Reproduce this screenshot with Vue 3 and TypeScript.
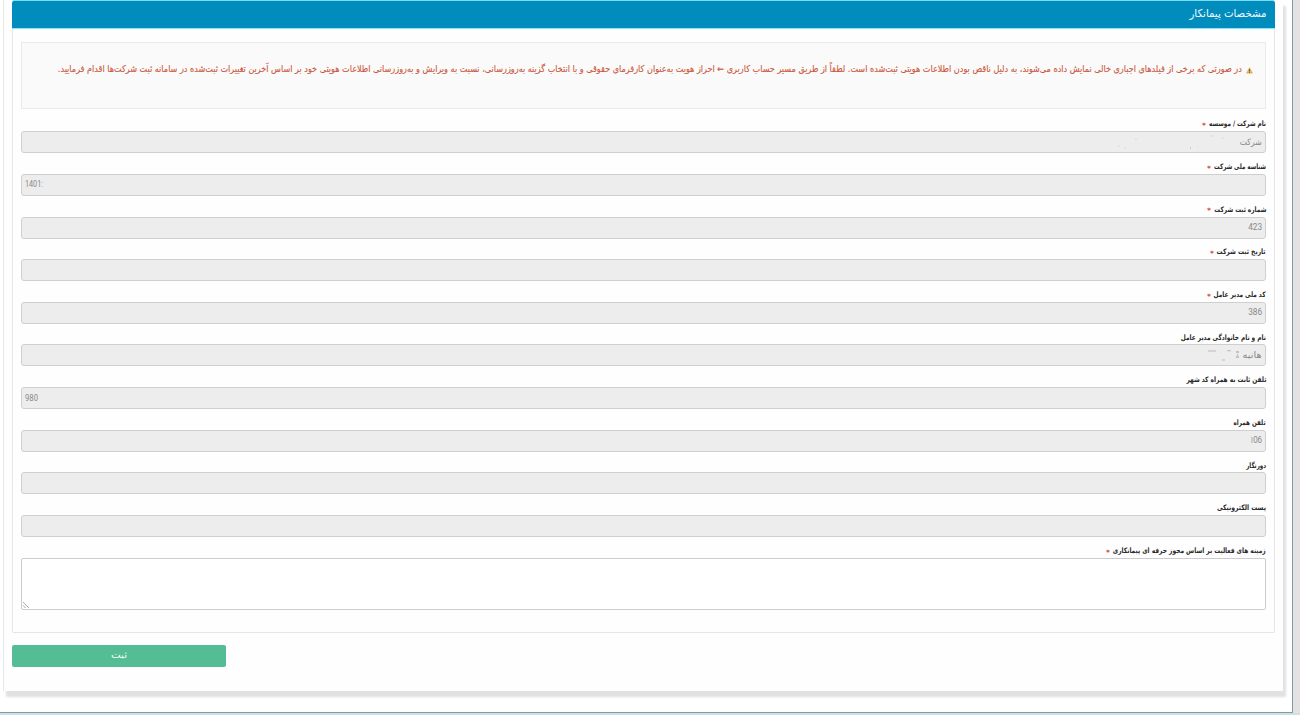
<script setup lang="ts">
import type { Directive } from 'vue'

interface Field {
  label: string
  labelWidth: number
  required?: boolean
  value?: string
  valueWidth?: number
  ltr?: boolean
  marks?: string
}

const fields: Field[] = [
  { label: 'نام شرکت / موسسه', labelWidth: 57, required: true, value: 'شرکت', valueWidth: 22, marks: 'company' },
  { label: 'شناسه ملی شرکت', labelWidth: 52, required: true, value: '1401:', valueWidth: 18, ltr: true },
  { label: 'شماره ثبت شرکت', labelWidth: 52, required: true, value: '423', valueWidth: 14 },
  { label: 'تاریخ ثبت شرکت', labelWidth: 49, required: true },
  { label: 'کد ملی مدیر عامل', labelWidth: 52, required: true, value: '386', valueWidth: 14 },
  { label: 'نام و نام خانوادگی مدیر عامل', labelWidth: 85, value: 'هانیه', valueWidth: 19, marks: 'name' },
  { label: 'تلفن ثابت به همراه کد شهر', labelWidth: 80, value: '980', valueWidth: 13, ltr: true },
  { label: 'تلفن همراه', labelWidth: 32, value: '06', valueWidth: 9, marks: 'mobile' },
  { label: 'دورنگار', labelWidth: 20 },
  { label: 'پست الکترونیکی', labelWidth: 49 },
]

// Condenses or widens a line of text horizontally to the given width.
const vFit: Directive<HTMLElement, number | undefined> = {
  mounted(el, binding) {
    if (!binding.value) return
    const natural = el.getBoundingClientRect().width
    el.style.transform = `scaleX(${binding.value / natural})`
    el.style.marginInlineEnd = `${binding.value - natural}px`
  },
}
</script>

<template>
  <div class="page" dir="rtl">
    <main class="frame">
      <section class="sheet">
        <div class="panel">
          <header class="heading"><span v-fit="77" class="fit">مشخصات پیمانکار</span></header>
          <div class="body">
            <div class="notice">
              <svg class="warn" viewBox="0 0 14 14">
                <path d="M7 1 L13.2 12.6 H.8 Z" fill="#e8bb55" stroke="#d2a040" stroke-width=".8" stroke-linejoin="round" />
                <path d="M7 4.6 V9" stroke="#444" stroke-width="1.8" />
                <circle cx="7" cy="11" r="1" fill="#444" />
              </svg>
              <span v-fit="1184" class="fit">در صورتی که برخی از فیلدهای اجباری خالی نمایش داده می‌شوند، به دلیل ناقص بودن اطلاعات هویتی ثبت‌شده است. لطفاً از طریق مسیر حساب کاربری ← احراز هویت به‌عنوان کارفرمای حقوقی و با انتخاب گزینه به‌روزرسانی، نسبت به ویرایش و به‌روزرسانی اطلاعات هویتی خود بر اساس آخرین تغییرات ثبت‌شده در سامانه ثبت شرکت‌ها اقدام فرمایید.</span>
            </div>
            <div v-for="f in fields" :key="f.label" class="field">
              <label class="label">
                <span v-fit="f.labelWidth" class="fit">{{ f.label }}</span>
                <b v-if="f.required" class="star">*</b>
              </label>
              <div class="input" :class="{ ltr: f.ltr }">
                <span v-if="f.value" v-fit="f.valueWidth" class="fit">{{ f.value }}</span>
                <svg v-if="f.marks === 'company'" class="marks" width="130" height="20" viewBox="0 0 130 20" fill="none" stroke="#d9d9d9">
                  <path d="M8 14h2M14 16h2M87 15h1M101 4h3M112 6h2M25 7h2" />
                  <path d="M80 16h1" stroke="#aaa" />
                </svg>
                <svg v-if="f.marks === 'name'" class="marks name" width="34" height="20" viewBox="0 0 34 20" fill="none" stroke="#bbb">
                  <path d="M1 6h8M20 6q2-1 4 0M15 15h3" />
                  <path d="M29 7h3M30 10h1M29 12h3" stroke="#999" />
                </svg>
                <svg v-if="f.marks === 'mobile'" class="tick" width="2" height="8" viewBox="0 0 2 8"><path d="M1 1v6" stroke="#aaa" /></svg>
              </div>
            </div>
            <div class="field">
              <label class="label">
                <span v-fit="153" class="fit">زمینه های فعالیت بر اساس مجوز حرفه ای پیمانکاری</span>
                <b class="star">*</b>
              </label>
              <div class="area">
                <svg width="8" height="8" viewBox="0 0 8 8" fill="none" stroke="#aaa"><path d="M1 1l6 6M1 4.5l2.5 2.5" /></svg>
              </div>
            </div>
          </div>
        </div>
        <button class="submit"><span v-fit="16" class="fit">ثبت</span></button>
      </section>
    </main>
  </div>
</template>

<style>
body {
  margin: 0;
  overflow: hidden;
}
</style>

<style scoped>
.page {
  box-sizing: border-box;
  width: 1300px;
  height: 715px;
  padding-right: 7px;
  background: #e5e1e3;
  border-bottom: 2px solid #d0dfe4;
  font-family: "DejaVu Sans", sans-serif;
  overflow: hidden;
}
.frame {
  box-sizing: border-box;
  width: 1293px;
  height: 713px;
  padding: 0 9px 0 3px;
  border-right: 1px solid #7d9da4;
  border-bottom: 1px solid #7d9da4;
  background: #fff;
}
.sheet {
  box-sizing: border-box;
  width: 1280px;
  height: 691px;
  padding: 0 8px;
  border-left: 1px solid #e8e8e8;
  background: #fefefe;
  box-shadow: 3px 6px 2px #e1e1e1;
}
.panel {
  box-sizing: border-box;
  width: 1263px;
  height: 633px;
  border: 1px solid #e6e6e6;
  border-top: 1px solid #79dcf2;
  border-radius: 2px;
}
.heading {
  display: flex;
  align-items: center;
  box-sizing: border-box;
  height: 27px;
  margin: 0 -1px;
  padding: 0 9px 2px;
  border-radius: 2px 2px 0 0;
  background: #008cbc;
  box-shadow: 0 1px #8ae6f3;
  color: #f2fbff;
  font-size: 11px;
}
.body {
  padding: 14px 8px 0;
}
.notice {
  display: flex;
  align-items: flex-start;
  gap: 4px;
  box-sizing: border-box;
  height: 67px;
  padding: 18px 12px 0;
  border: 1px solid #eaeaea;
  background: #fafafa;
  color: #cb5a42;
  font-size: 9.5px;
  line-height: 16px;
  -webkit-text-stroke: .15px #cb5a42;
}
.warn {
  flex: none;
  width: 7px;
  height: 7px;
  margin-top: 6px;
}
.fit {
  display: inline-block;
  flex: none;
  transform-origin: right center;
  white-space: nowrap;
}
.notice + .field {
  margin-top: 8.7px;
}
.field {
  height: 42.67px;
}
.label {
  display: flex;
  align-items: center;
  gap: 3px;
  height: 13.5px;
  color: #2a2a2a;
  font-size: 7.5px;
  line-height: 10px;
  font-weight: bold;
  box-sizing: border-box;
}
.star {
  color: #d04a3e;
  font-size: 7.5px;
  line-height: 8px;
  padding-top: 3px;
}
.input {
  display: flex;
  align-items: center;
  box-sizing: border-box;
  height: 22px;
  padding: 0 3px 1px;
  border: 1px solid #cfcfcf;
  border-radius: 3px;
  background: #ededed;
  color: #888;
  font-family: Roboto, "DejaVu Sans", sans-serif;
  font-size: 9px;
}
.ltr {
  direction: ltr;
}
.ltr .fit {
  transform-origin: left center;
}
.marks.name {
  margin-right: 2px;
}
.tick {
  margin-right: 0;
}
.area {
  display: flex;
  align-items: flex-end;
  justify-content: flex-end;
  box-sizing: border-box;
  height: 52px;
  border: 1px solid #ccc;
  border-radius: 2px;
  background: #fff;
}
.submit {
  display: flex;
  align-items: center;
  justify-content: center;
  width: 214px;
  height: 22px;
  margin: 12px auto 0 0;
  padding: 0 0 2px;
  border: 0;
  border-radius: 2px;
  background: #54bd95;
  color: #fff;
  font-family: inherit;
  font-size: 9px;
}
</style>
